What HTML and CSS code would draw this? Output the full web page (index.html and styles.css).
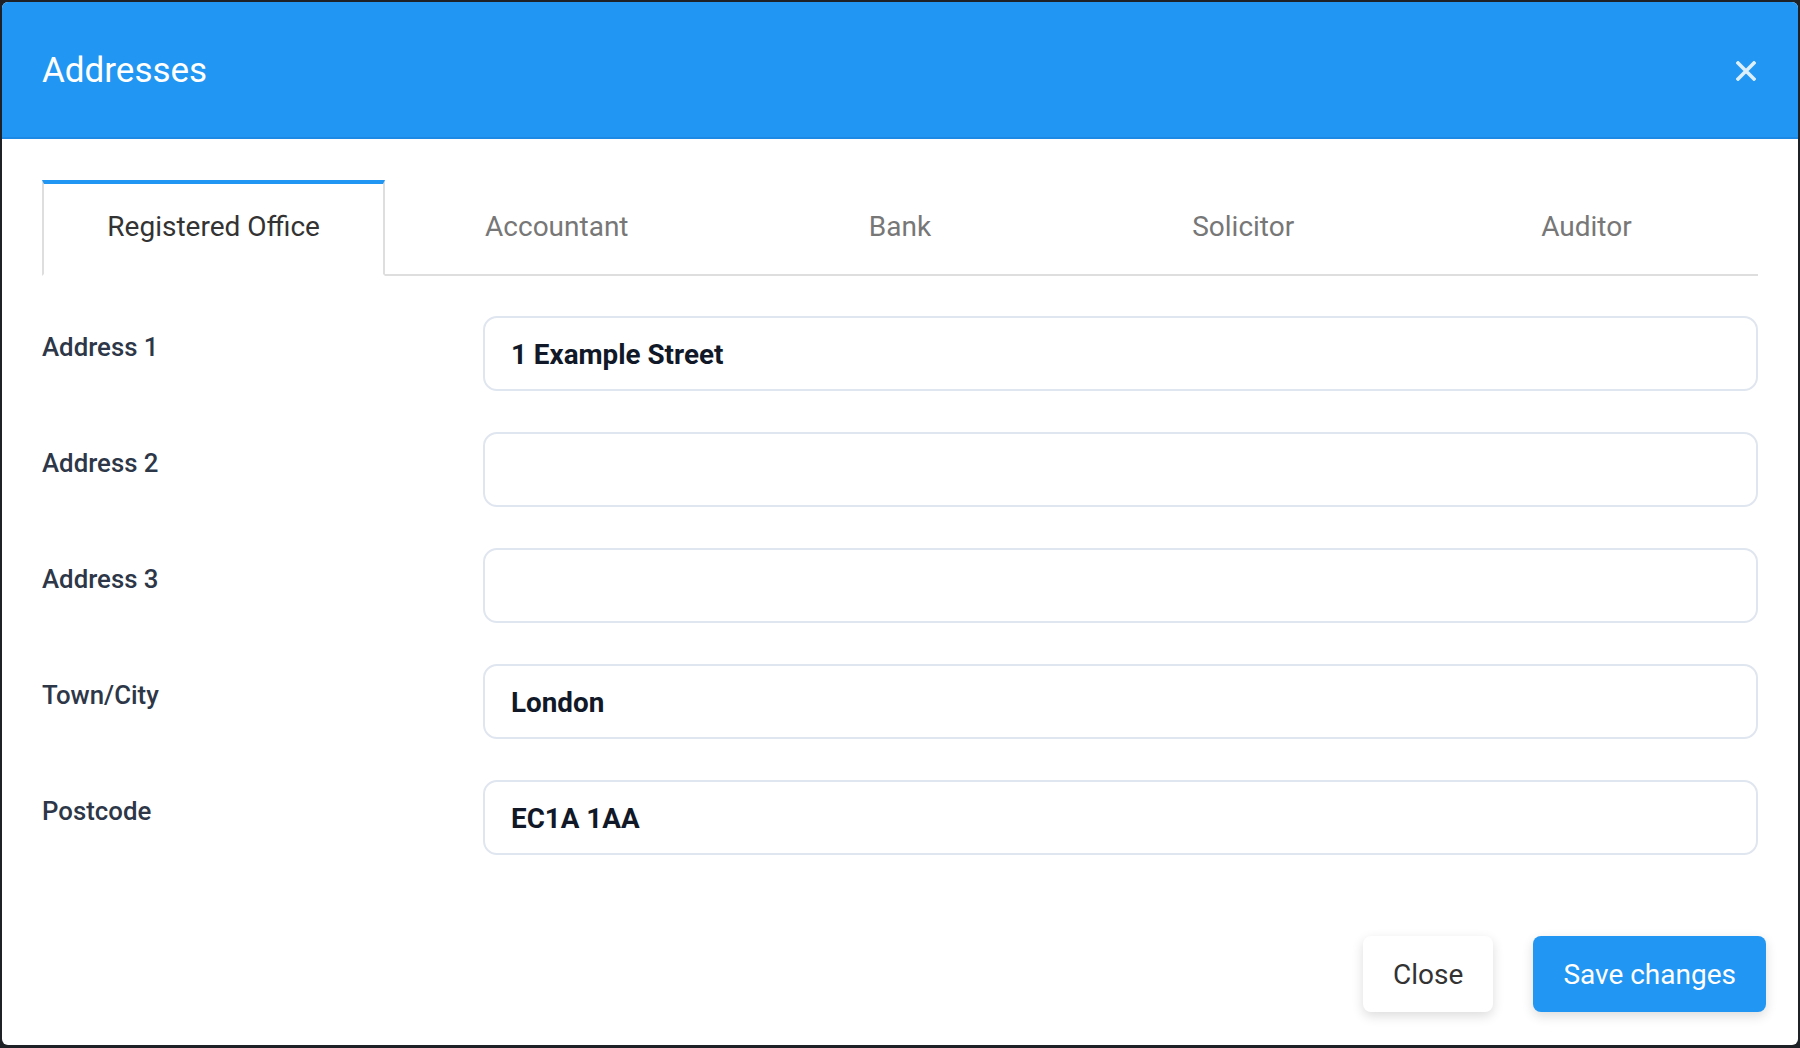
FILE: index.html
```html
<!DOCTYPE html>
<html lang="en">
<head>
<meta charset="utf-8">
<title>Addresses</title>
<link rel="stylesheet" href="styles.css">
</head>
<body>
<div class="modal">
  <div class="modal-header">
    <h1 class="modal-title">Addresses</h1>
    <button class="close-x" aria-label="Close">
      <svg width="20" height="20" viewBox="0 0 20 20"><path d="M2 2 L18 18 M18 2 L2 18" stroke="#dcefff" stroke-width="3.6" stroke-linecap="square" fill="none"/></svg>
    </button>
  </div>
  <div class="modal-body">
    <div class="tabs">
      <div class="tab active">Registered Office</div>
      <div class="tab">Accountant</div>
      <div class="tab">Bank</div>
      <div class="tab">Solicitor</div>
      <div class="tab">Auditor</div>
    </div>
    <div class="form">
      <label class="label">Address 1</label>
      <input class="field" type="text" value="1 Example Street">
      <label class="label">Address 2</label>
      <input class="field" type="text" value="">
      <label class="label">Address 3</label>
      <input class="field" type="text" value="">
      <label class="label">Town/City</label>
      <input class="field" type="text" value="London">
      <label class="label">Postcode</label>
      <input class="field" type="text" value="EC1A 1AA">
    </div>
  </div>
  <div class="modal-footer">
    <button class="btn btn-light">Close</button>
    <button class="btn btn-primary">Save changes</button>
  </div>
</div>
</body>
</html>
```
FILE: styles.css
```css
* { box-sizing: border-box; }
html, body { margin: 0; padding: 0; }
body {
  background: #1e2227;
  font-family: Roboto, "Liberation Sans", Arial, sans-serif;
  width: 1800px;
  height: 1048px;
  overflow: hidden;
  padding: 2px;
}
.modal {
  width: 1796px;
  height: 1043px;
  background: #fff;
  border-radius: 6px;
  overflow: hidden;
  display: flex;
  flex-direction: column;
}
.modal-header {
  height: 137px;
  flex: none;
  background: #2196f3;
  border-bottom: 2px solid #1e88e5;
  display: flex;
  align-items: center;
  justify-content: space-between;
  padding: 2px 42px 0 40px;
}
.modal-title {
  margin: 0;
  color: #fff;
  font-weight: 400;
  font-size: 35px;
  line-height: 1;
}
.close-x {
  background: none;
  border: 0;
  padding: 0;
  width: 20px;
  height: 20px;
  display: flex;
  cursor: pointer;
}
.modal-body {
  padding: 41px 40px 0 40px;
}
.tabs {
  display: flex;
  height: 96px;
  border-bottom: 2px solid #dedede;
}
.tab {
  flex: 1;
  height: 96px;
  margin-bottom: -2px;
  border-top: 4px solid transparent;
  border-left: 2px solid transparent;
  border-right: 2px solid transparent;
  border-bottom: 2px solid transparent;
  display: flex;
  align-items: center;
  justify-content: center;
  padding-bottom: 6px;
  font-size: 28px;
  color: #777;
}
.tab.active {
  border-top-color: #2196f3;
  border-left-color: #dedede;
  border-right-color: #dedede;
  border-bottom-color: #fff;
  background: #fff;
  color: #333;
}
.form {
  margin-top: 40px;
  display: grid;
  grid-template-columns: 441px 1fr;
  grid-auto-rows: 75px;
  row-gap: 41px;
}
.label {
  padding-top: 16px;
  font-size: 25.8px;
  font-weight: 500;
  color: #2d3748;
}
.field {
  height: 75px;
  width: 100%;
  border: 2px solid #e0e6ef;
  border-radius: 14px;
  padding: 2px 27px 0 26px;
  font-family: inherit;
  font-size: 27.8px;
  font-weight: 700;
  color: #111827;
  background: #fff;
  outline: none;
}
.modal-footer {
  margin-top: 81px;
  display: flex;
  justify-content: flex-end;
  gap: 40px;
  padding-right: 32px;
}
.btn {
  height: 76px;
  padding: 0 30px;
  border: 0;
  border-radius: 8px;
  font-family: inherit;
  font-size: 28px;
  font-weight: 400;
  cursor: pointer;
  box-shadow: 0 4px 12px rgba(0, 0, 0, 0.14);
}
.btn-light {
  background: #fff;
  color: #333;
}
.btn-primary {
  background: #2196f3;
  color: #fff;
}
```
